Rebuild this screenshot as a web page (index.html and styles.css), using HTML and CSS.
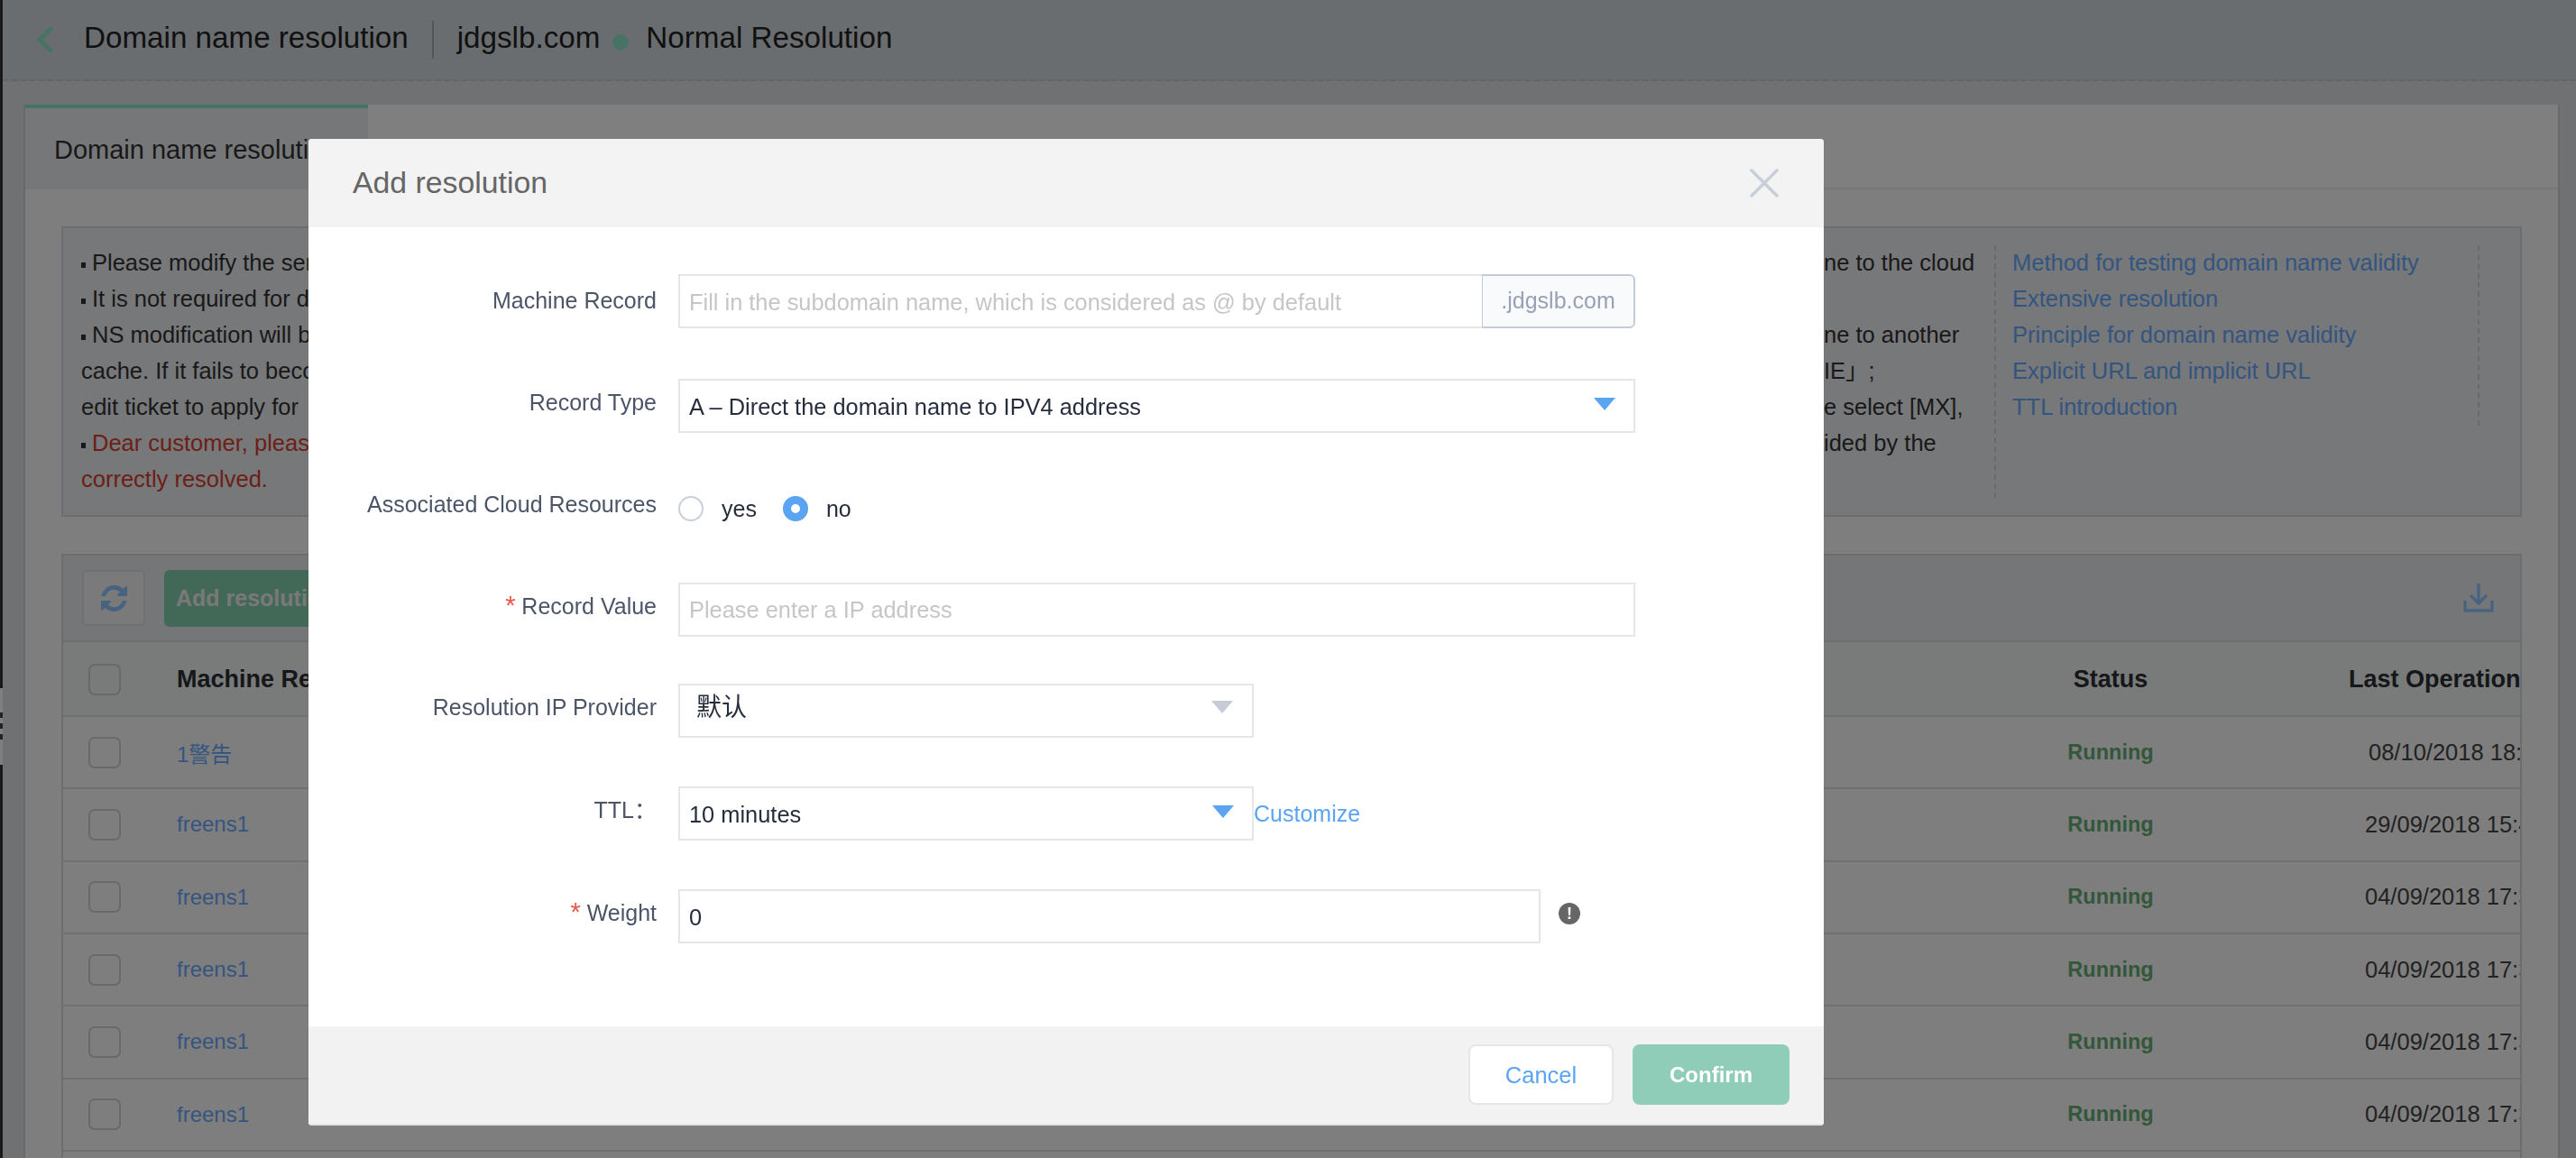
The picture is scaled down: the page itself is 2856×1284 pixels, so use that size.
FILE: index.html
```html
<!DOCTYPE html>
<html>
<head>
	<meta charset="utf-8">
	<title>Domain name resolution</title>
	<link rel="stylesheet" href="styles.css">
</head>
<body>
	<div class="page">
		<div class="handle"></div>
		<div class="topbar">
			<svg class="back" viewBox="0 0 21 28"><path d="M18 1 5 14l13 13" fill="none" stroke="#8fe6c8" stroke-width="5"/></svg>
			<span class="topbar-text title">Domain name resolution</span>
			<span class="topbar-sep"></span>
			<span class="topbar-text">jdgslb.com</span>
			<span class="topbar-dot"></span>
			<span class="topbar-text">Normal Resolution</span>
		</div>

		<div class="panel">
			<div class="tabs">
				<div class="tab">Domain name resolution</div>
			</div>
			<div class="panel-body">
				<div class="notice">
					<div class="notice-text">
						<div class="line"><span class="left"><i class="dot"></i>Please modify the server</span><span class="right">ne to the cloud</span></div>
						<div class="line"><span class="left"><i class="dot"></i>It is not required for domain</span></div>
						<div class="line"><span class="left"><i class="dot"></i>NS modification will be</span><span class="right">ne to another</span></div>
						<div class="line"><span class="left">cache. If it fails to become</span><span class="right">IE」;</span></div>
						<div class="line"><span class="left">edit ticket to apply for</span><span class="right">e select [MX],</span></div>
						<div class="line"><span class="left red"><i class="dot"></i>Dear customer, please</span><span class="right">ided by the</span></div>
						<div class="line"><span class="left red">correctly resolved.</span></div>
					</div>
					<div class="notice-links">
						<a>Method for testing domain name validity</a>
						<a>Extensive resolution</a>
						<a>Principle for domain name validity</a>
						<a>Explicit URL and implicit URL</a>
						<a>TTL introduction</a>
					</div>
				</div>

				<div class="table-box">
					<div class="toolbar">
						<div class="btn-refresh">
							<svg viewBox="128 128 1536 1536" width="29" height="29"><path fill="#8fc6ff" d="M1639 1056q0 5-1 7-64 268-268 434.5t-478 166.5q-146 0-282.5-55t-243.5-157l-129 129q-19 19-45 19t-45-19-19-45v-448q0-26 19-45t45-19h448q26 0 45 19t19 45-19 45l-137 137q71 66 161 102t187 36q134 0 250-65t186-179q11-17 53-117 8-23 30-23h192q13 0 22.5 9.5t9.5 22.5zm25-800v448q0 26-19 45t-45 19h-448q-26 0-45-19t-19-45 19-45l138-138q-148-137-349-137-134 0-250 65t-186 179q-11 17-53 117-8 23-30 23h-199q-13 0-22.5-9.5t-9.5-22.5v-7q65-268 270-434.5t480-166.5q146 0 284 55.5t245 156.5l130-129q19-19 45-19t45 19 19 45z"/></svg>
						</div>
						<div class="btn-add">Add resolution</div>
						<svg class="download" viewBox="0 0 34 32"><path d="M17 0v21M8 13l9 9 9-9M2 19v11h30V19" fill="none" stroke="#8fc6ff" stroke-width="3.4"/></svg>
					</div>
					<div class="row row-head">
						<span class="check"></span>
						<span class="col-name">Machine Record</span>
						<span class="col-status">Status</span>
						<span class="col-time">Last Operation Time</span>
					</div>
					<div class="row">
						<span class="check"></span>
						<span class="col-name link">1警告</span>
						<span class="col-status run">Running</span>
						<span class="col-time first">08/10/2018 18:20:11</span>
					</div>
					<div class="row">
						<span class="check"></span>
						<span class="col-name link">freens1</span>
						<span class="col-status run">Running</span>
						<span class="col-time">29/09/2018 15:41:02</span>
					</div>
					<div class="row">
						<span class="check"></span>
						<span class="col-name link">freens1</span>
						<span class="col-status run">Running</span>
						<span class="col-time">04/09/2018 17:30:25</span>
					</div>
					<div class="row">
						<span class="check"></span>
						<span class="col-name link">freens1</span>
						<span class="col-status run">Running</span>
						<span class="col-time">04/09/2018 17:30:25</span>
					</div>
					<div class="row">
						<span class="check"></span>
						<span class="col-name link">freens1</span>
						<span class="col-status run">Running</span>
						<span class="col-time">04/09/2018 17:30:25</span>
					</div>
					<div class="row">
						<span class="check"></span>
						<span class="col-name link">freens1</span>
						<span class="col-status run">Running</span>
						<span class="col-time">04/09/2018 17:30:25</span>
					</div>
					<div class="row"></div>
				</div>
			</div>
		</div>
	</div>

	<div class="mask"></div>

	<div class="modal">
		<div class="modal-head">
			<span class="modal-title">Add resolution</span>
			<svg class="close" viewBox="0 0 32 32"><path d="M2 2l28 28M30 2 2 30" stroke="#c8cfd9" stroke-width="3.6" stroke-linecap="round"/></svg>
		</div>
		<div class="modal-body">
			<div class="form-row">
				<label class="first-label">Machine Record</label>
				<div class="field wide no-right placeholder">Fill in the subdomain name, which is considered as @ by default</div>
				<div class="suffix">.jdgslb.com</div>
			</div>
			<div class="form-row">
				<label>Record Type</label>
				<div class="field full">A – Direct the domain name to IPV4 address<i class="arrow"></i></div>
			</div>
			<div class="form-row">
				<label class="radio-label">Associated Cloud Resources</label>
				<div class="radios">
					<span class="radio"></span><span class="radio-text">yes</span>
					<span class="radio on"></span><span class="radio-text">no</span>
				</div>
			</div>
			<div class="form-row">
				<label><em>*</em> Record Value</label>
				<div class="field full placeholder value-ph">Please enter a IP address</div>
			</div>
			<div class="form-row">
				<label>Resolution IP Provider</label>
				<div class="field half cn">默认<i class="arrow gray"></i></div>
			</div>
			<div class="form-row">
				<label>TTL：</label>
				<div class="field half">10 minutes<i class="arrow"></i></div>
				<a class="customize">Customize</a>
			</div>
			<div class="form-row">
				<label><em>*</em> Weight</label>
				<div class="field weight">0</div>
				<span class="info">!</span>
			</div>
		</div>
		<div class="modal-foot">
			<div class="btn btn-cancel">Cancel</div>
			<div class="btn btn-ok">Confirm</div>
		</div>
	</div>
</body>
</html>
```

FILE: styles.css
```css
html, body {
	margin: 0;
	height: 100%;
	overflow: hidden;
}
body {
	font-family: "Liberation Sans", "Noto Sans CJK SC", sans-serif;
	background: #e0e3e5;
	color: #333;
}
.page {
	height: 1284px;
	overflow: hidden;
	border-left: 3px solid #333;
}

/* little grip on the left edge */
.handle {
	position: absolute;
	left: 0;
	top: 763px;
	width: 3px;
	height: 85px;
	background: #fff;
}
.handle::before {
	content: "";
	display: block;
	width: 3px;
	height: 6px;
	margin-top: 27px;
	background: #444;
	box-shadow: 0 12px #444, 0 24px #444;
	position: absolute;
}

/* top bar */
.topbar {
	height: 88px;
	display: flex;
	align-items: center;
	background: #d4dade;
	border-bottom: 2px dashed #c4c8cc;
	font-size: 33.2px;
	color: #222;
}
.topbar-text {
	padding-bottom: 5px;
}
.back {
	width: 21px;
	height: 28px;
	margin-left: 36px;
}
.title {
	margin-left: 33px;
}
.topbar-sep {
	width: 2px;
	height: 42px;
	background: #a9afb5;
	margin: 0 26px;
}
.topbar-dot {
	width: 18px;
	height: 18px;
	margin: 5px 19px 0 14px;
	border-radius: 50%;
	background: #8fe6c8;
}

/* panel */
.panel {
	margin: 26px 18px 0 23px;
	background: #fff;
	border-left: 2px solid #d0d2d4;
	border-right: 2px solid #d0d2d4;
}
.tabs {
	height: 92px;
	background: #fff;
}
.tab {
	width: 380px;
	height: 92px;
	box-sizing: border-box;
	border-top: 4px solid #8fe6c8;
	padding: 0 0 0 32px;
	line-height: 92px;
	background: #eceef0;
	font-size: 29px;
	white-space: nowrap;
	overflow: hidden;
}
.panel-body {
	padding: 43px 40px 0;
	background: #fdfdfd;
	border-top: 2px solid #eceef0;
}
.notice {
	display: flex;
	height: 322px;
	box-sizing: border-box;
	border: 2px solid #d8dadc;
	background: #eef0f2;
	padding: 19px 0 0 20px;
	font-size: 25.5px;
	margin-top: -2px;
}
.notice-text {
	width: 2121px;
	flex: none;
}
.line {
	display: flex;
	height: 40px;
	line-height: 38px;
	white-space: nowrap;
}
.line .left {
	width: 1932px;
	flex: none;
}
.dot {
	display: inline-block;
	width: 5px;
	height: 6px;
	background: #333;
	margin: 0 7px 3px 0;
}
.red {
	color: #d8402f;
}
.notice-links {
	width: 538px;
	height: 280px;
	box-sizing: border-box;
	border-left: 2px dashed #cfd3d8;
	padding-left: 18px;
	display: flex;
	flex-direction: column;
	position: relative;
}
.notice-links::after {
	content: "";
	position: absolute;
	right: 0;
	top: 0;
	height: 200px;
	border-right: 2px dashed #cfd3d8;
}
.notice-links a {
	height: 40px;
	line-height: 38px;
	color: #68aaff;
}

/* table */
.table-box {
	margin-top: 41px;
	width: 2728px;
	box-sizing: border-box;
	overflow: hidden;
	border-left: 2px solid #d8dadc;
	border-right: 2px solid #d8dadc;
}
.toolbar {
	height: 98px;
	display: flex;
	align-items: center;
	background: #ebedef;
	border-top: 2px solid #d8dadc;
	border-bottom: 2px solid #d8dadc;
	box-sizing: border-box;
	padding-left: 21px;
}
.btn-refresh {
	width: 70px;
	height: 62px;
	box-sizing: border-box;
	border: 2px solid #dfe1e4;
	border-radius: 5px;
	background: #f4f5f6;
	display: flex;
	align-items: center;
	justify-content: center;
}
.btn-add {
	width: 300px;
	height: 63px;
	margin-left: 21px;
	padding-left: 13px;
	line-height: 62px;
	border-radius: 6px;
	background: #84d0b0;
	color: #f2f2f2;
	font-size: 25px;
	font-weight: bold;
}
.download {
	width: 34px;
	height: 32px;
	margin-left: auto;
	margin-right: 29px;
}
.row {
	height: 80.33px;
	box-sizing: border-box;
	display: flex;
	align-items: center;
	border-bottom: 2px solid #dde0e4;
	background: #fdfdfd;
	font-size: 24px;
	white-space: nowrap;
}
.row-head {
	height: 83px;
	padding-top: 2px;
	background: #f3f4f5;
	font-size: 27px;
	font-weight: bold;
	color: #2a2e33;
}
.check {
	width: 36px;
	height: 35px;
	flex: none;
	box-sizing: border-box;
	margin-left: 28px;
	border: 2px solid #d0d2d6;
	border-radius: 7px;
}
.col-name {
	margin-left: 62px;
	width: 2000px;
	flex: none;
}
.link {
	color: #68aaff;
}
.col-status {
	width: 288px;
	flex: none;
	text-align: center;
}
.run {
	color: #66ae74;
	font-size: 23.5px;
	font-weight: bold;
}
.col-time {
	flex: none;
	margin-left: 138px;
	font-size: 25.5px;
	color: #444;
}
.col-time.first {
	margin-left: 142px;
}
.row-head .col-time {
	margin-left: 120px;
	font-size: 27px;
	color: #2a2e33;
}

/* dialog */
.mask {
	position: fixed;
	left: 0;
	top: 0;
	right: 0;
	bottom: 0;
	background: rgba(0, 0, 0, .5);
}
.modal {
	position: fixed;
	left: 342px;
	top: 154px;
	width: 1680px;
	height: 1094px;
	border-radius: 4px;
	overflow: hidden;
	background: #fff;
	display: flex;
	flex-direction: column;
	font-size: 25px;
}
.modal-head {
	height: 98px;
	flex: none;
	background: #f3f3f3;
	display: flex;
	align-items: center;
	justify-content: space-between;
	padding: 0 50px 0 49px;
}
.modal-title {
	font-size: 33.8px;
	color: #666;
	padding-bottom: 2px;
}
.close {
	width: 32px;
	height: 32px;
}
.modal-body {
	flex: 1;
	padding-top: 52px;
	display: grid;
	grid-template-rows: 116px 116px 110px 112px 114px 114px 60px;
}
.form-row {
	display: flex;
	align-items: flex-start;
}
.form-row label {
	width: 386px;
	flex: none;
	margin-right: 24px;
	text-align: right;
	line-height: 52px;
	color: #4c5568;
}
.form-row em {
	color: #e5584a;
	font-style: normal;
	font-size: 29px;
	line-height: 20px;
}
.first-label {
	padding-top: 3px;
}
.radio-label {
	margin-top: -3px;
}
.field {
	height: 60px;
	box-sizing: border-box;
	border: 2px solid #e6e6e6;
	padding: 3px 0 0 10px;
	display: flex;
	align-items: center;
	position: relative;
	color: #262d3d;
	font-size: 25.4px;
	white-space: nowrap;
}
.placeholder {
	color: #c6c6c6;
}
.value-ph {
	padding-top: 1px;
}
.wide {
	width: 891px;
}
.no-right {
	border-right: 0;
}
.full {
	width: 1061px;
}
.half {
	width: 638px;
}
.weight {
	width: 956px;
}
.field.cn {
	padding: 0 0 12px 18px;
	font-size: 28px;
}
.suffix {
	width: 170px;
	height: 60px;
	box-sizing: border-box;
	border: 2px solid #c5ccd9;
	border-left-width: 1px;
	border-radius: 0 6px 6px 0;
	background: #f8fafc;
	color: #98a1b5;
	line-height: 54px;
	text-align: center;
}
.arrow {
	position: absolute;
	right: 20px;
	top: 19px;
	width: 0;
	height: 0;
	border-left: 12px solid transparent;
	border-right: 12px solid transparent;
	border-top: 14px solid #5ba4f2;
}
.arrow.gray {
	top: 17px;
	border-top-color: #c5ccd6;
	right: 21px;
}
.radios {
	display: flex;
	align-items: center;
	height: 56px;
}
.radio {
	width: 28px;
	height: 28px;
	box-sizing: border-box;
	border: 2px solid #c8d0da;
	border-radius: 50%;
}
.radio.on {
	border: 9px solid #5ba4f2;
}
.radio-text {
	margin-left: 20px;
	margin-right: 29px;
	color: #262d3d;
}
.customize {
	color: #5ba4f2;
	line-height: 60px;
}
.info {
	width: 24px;
	height: 24px;
	margin: 15px 0 0 20px;
	border-radius: 50%;
	background: #666;
	color: #fff;
	font-size: 18px;
	font-weight: bold;
	line-height: 24px;
	text-align: center;
}
.modal-foot {
	height: 110px;
	flex: none;
	box-sizing: border-box;
	background: #f2f2f2;
	border-bottom: 2px solid #e2e2e2;
	display: flex;
	justify-content: flex-end;
	padding: 20px 38px 0 0;
	font-size: 25.5px;
}
.btn {
	height: 67px;
	box-sizing: border-box;
	border-radius: 8px;
	line-height: 64px;
	text-align: center;
}
.btn-cancel {
	width: 161px;
	border: 2px solid #e6e6e6;
	background: #fff;
	color: #5ba4f2;
}
.btn-ok {
	width: 174px;
	margin-left: 21px;
	background: #8fcdb8;
	color: #fff;
	font-size: 24px;
	font-weight: bold;
	line-height: 67px;
}
```
